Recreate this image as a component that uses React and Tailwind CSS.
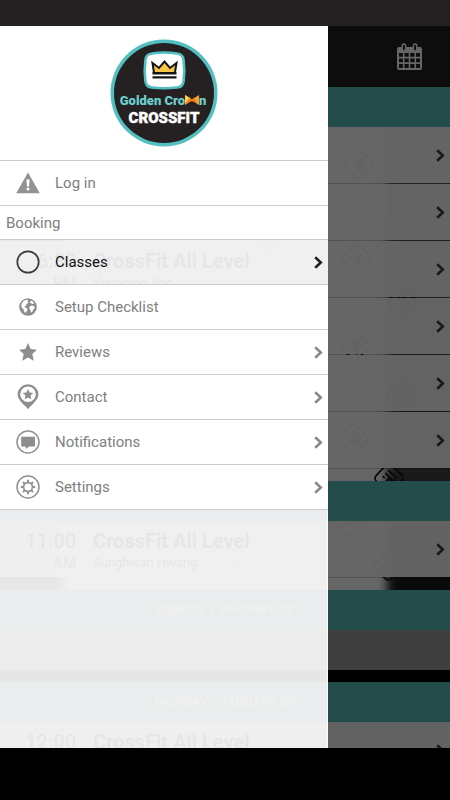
import React from "react";

const evening = { time: "6:30", half: "PM", title: "CrossFit All Level", coach: "Youngjoo Yoo" };
const morning = { time: "11:00", half: "AM", title: "CrossFit All Level", coach: "Sunghwan Hwang" };
const noon = { time: "12:00", half: "PM", title: "CrossFit All Level", coach: "" };

const days = [
  { label: "", classes: [null, null, evening, null, null, null] },
  { label: "", classes: [morning] },
  { label: "SUNDAY / JANUARY 08", classes: [] },
  { label: "MONDAY / JANUARY 09", classes: [noon] },
];

const stamps = [
  [359, 78], [357, 171], [355, 259], [354, 351], [389, 391], [348, 434], [388, 479],
  [402, 215], [401, 307], [237, 475], [78, 518], [268, 165], [270, 345],
];

function Chevron({ className }) {
  return (
    <svg className={className} width="9" height="13" viewBox="0 0 9 13" fill="none" stroke="currentColor" strokeWidth="2.6" aria-hidden="true">
      <path d="M1.2 1.2 6.8 6.5 1.2 11.8" />
    </svg>
  );
}

function WarningIcon() {
  return (
    <svg width="24" height="22" viewBox="0 0 24 22" aria-hidden="true">
      <path d="M12 .5 23.8 21.2H.2Z" fill="#929292" />
      <path d="M10.4 7.5h3.2l-.6 7h-2Z" fill="#fff" />
      <circle cx="12" cy="17.1" r="1.5" fill="#fff" />
    </svg>
  );
}

function RingIcon() {
  return (
    <svg width="24" height="24" viewBox="0 0 24 24" fill="none" aria-hidden="true">
      <circle cx="12" cy="12" r="10.7" stroke="#3c3c3c" strokeWidth="1.7" />
    </svg>
  );
}

function GlobeIcon() {
  return (
    <svg width="18" height="18" viewBox="0 0 18 18" aria-hidden="true">
      <circle cx="9" cy="9" r="8.8" fill="#8e8e8e" />
      <path d="M4.200 3.200 6.500 1.900l2.700.2-.8 1.400 1.200 1-2.200 1.800-.5 1.700-1.700.3 1.400 1.400 1.700.9-.2 2-1.600 2.400L5 13.300l-.6-2.300-2-1.800.2-3.200Z" fill="#fff" />
      <path d="m10.800 8.200 2.200-.8 2.600 1-.2 2.200-1.500 1.400-.5 2-1.200.6-.9-2.500-1-1.700Z" fill="#fff" />
      <path d="m11.800 2.600 2 1 1.300 1.900-1.500.4-1.600-.6-1-.9Z" fill="#fff" />
    </svg>
  );
}

function StarIcon() {
  return (
    <svg width="18" height="18" viewBox="0 0 18 18" aria-hidden="true">
      <path d="m9 .1 2.700 5.900 6.300.7-4.700 4.400 1.400 6.700L9 14.400l-5.700 3.400 1.400-6.700L0 6.700 6.300 6Z" fill="#8e8e8e" />
    </svg>
  );
}

function PinIcon() {
  return (
    <svg width="22" height="26" viewBox="0 0 22 26" aria-hidden="true">
      <path d="M11 25.200C8.600 22 .6 16.500.6 10.600a10.400 10.400 0 0 1 20.800 0c0 5.900-8 11.400-10.400 14.600Z" fill="#8e8e8e" />
      <circle cx="11" cy="10.300" r="7.800" fill="#fff" />
      <path d="m11 5 1.600 3.500 3.800.4-2.900 2.600.8 3.800-3.300-1.900-3.300 1.900.8-3.800-2.900-2.600 3.800-.4Z" fill="#8e8e8e" />
    </svg>
  );
}

function MessageIcon() {
  return (
    <svg width="24" height="24" viewBox="0 0 24 24" aria-hidden="true">
      <circle cx="12" cy="12" r="11" fill="none" stroke="#929292" strokeWidth="1.500" />
      <path d="M5.200 6.800h13.800v9.600h-5.800l-3.600 2.500v-2.500H5.200Z" fill="#8e8e8e" />
    </svg>
  );
}

function GearIcon() {
  return (
    <svg width="24" height="24" viewBox="0 0 24 24" fill="none" stroke="#929292" aria-hidden="true">
      <circle cx="12" cy="12" r="11" strokeWidth="1.500" />
      <circle cx="12" cy="12" r="4.400" strokeWidth="1.600" />
      <path strokeWidth="2" d="M12 7.700V4.800M12 16.300V19.200M7.700 12H4.800M16.300 12H19.200M9 9 7 7M15 9l2-2M9 15l-2 2M15 15l2 2" />
    </svg>
  );
}

function CalendarIcon() {
  return (
    <svg width="25" height="28" viewBox="0 0 25 28" aria-hidden="true">
      <path d="M2 4h21a2 2 0 0 1 2 2v19a2 2 0 0 1-2 2H2a2 2 0 0 1-2-2V6a2 2 0 0 1 2-2Z" fill="currentColor" />
      <g fill="#252122" stroke="currentColor" strokeWidth="1.500">
        <rect x="5.200" y="1" width="3.400" height="7" rx="1.700" />
        <rect x="16.400" y="1" width="3.400" height="7" rx="1.700" />
      </g>
      <g fill="#252122">
        <path d="M2 10h3.900v3.800H2zM7.500 10h4.200v3.800H7.500zM13.300 10h4.200v3.800h-4.200zM19.100 10H23v3.800h-3.900z" />
        <path d="M2 15.400h3.900v3.900H2zM7.500 15.400h4.200v3.900H7.500zM13.300 15.400h4.200v3.900h-4.200zM19.100 15.400H23v3.900h-3.900z" />
        <path d="M2 20.900h3.900v4.100H2zM7.500 20.900h4.200v4.100H7.500zM13.300 20.900h4.200v4.100h-4.200zM19.100 20.900H23v4.100h-3.900z" />
      </g>
    </svg>
  );
}

function Logo() {
  return (
    <svg width="108" height="108" viewBox="0 0 108 108" role="img" aria-label="Golden Crown CrossFit">
      <circle cx="54" cy="54" r="53.500" fill="#54bfc0" />
      <circle cx="54" cy="54" r="50" fill="#252122" />
      <path d="M42 14.500q12-2 25 0 6 .6 6.600 6.500 1.400 11 0 21-.6 6-6.600 6.500-13 1.600-25 0-6-.6-6.600-6.500-1.400-10 0-21 .6-6 6.600-6.500Z" fill="#fff" stroke="#54bfc0" strokeWidth="2.600" />
      <path d="m42.500 24 6.500 5 5.500-6.500 5.500 6.500 6.500-5-1.600 10H44Z" fill="#f7c548" stroke="#151515" strokeWidth="2" />
      <path d="M42.500 33h24v2.600h-24zM42.500 37.200h24v2.200h-24z" fill="#151515" />
      <g fontFamily="'Roboto', 'Liberation Sans', sans-serif" fontWeight="900">
        <text x="75" y="66" fontSize="13" textAnchor="end" fill="#6ccdce">Golden Cro</text>
        <text x="89" y="66" fontSize="13" fill="#6ccdce">n</text>
        <text x="54" y="84" fontSize="15" textAnchor="middle" fill="#fff" stroke="#fff" strokeWidth=".4">CROSSFIT</text>
      </g>
      <path d="m75 56 7 4.500L89 56v10l-7-4.500L75 66Z" fill="#f9a51a" />
      <path d="m75 66 5-8 2 5 2-5 5 8-5-3.500-4 0Z" fill="#f47b20" />
      <path d="m75 56 5 3-5 5Z" fill="#fbd04b" />
    </svg>
  );
}

function Backdrop() {
  return (
    <svg className="absolute left-0 top-0 h-full w-full" viewBox="0 0 450 661" preserveAspectRatio="xMinYMin slice" aria-hidden="true">
      <defs>
        <linearGradient id="side" x1="0" y1="0" x2="0" y2="1">
          <stop offset="0" stopColor="#777" />
          <stop offset=".55" stopColor="#484848" />
          <stop offset=".8" stopColor="#111" />
          <stop offset="1" stopColor="#000" />
        </linearGradient>
        <filter id="soft"><feGaussianBlur stdDeviation="5" /></filter>
      </defs>
      <rect width="450" height="661" fill="url(#side)" />
      <rect x="62" y="-30" width="325" height="620" fill="#fff" filter="url(#soft)" />
      <g fill="none" stroke="#151515" strokeWidth="1.800">
        {stamps.map(([x, y]) => (
          <g key={`${x}-${y}`} transform={`translate(${x} ${y}) rotate(43)`}>
            <rect x="-11" y="-11" width="22" height="22" rx="4" />
            <path d="M-6-5H6M-6-1H0V6M-6 3h3M2 6V-1l5 6M7-3 2 0" />
          </g>
        ))}
      </g>
    </svg>
  );
}

function ClassRow({ item }) {
  return (
    <button
      type="button"
      aria-label={item ? undefined : "Open class"}
      className="flex h-[57px] w-full shrink-0 items-center border-b border-black/20 bg-white/96 bg-clip-padding pr-[5px] text-left text-black"
    >
      {item && (
        <>
          <span className="flex w-[76px] flex-col items-end pt-1">
            <span className="text-xl leading-6 font-medium">{item.time}</span>
            <span className="text-[15px] leading-5">{item.half}</span>
          </span>
          <span className="ml-[17px] flex flex-col pt-1">
            <span className="text-xl leading-6 font-bold">{item.title}</span>
            <span className="h-5 text-[13px] leading-5">{item.coach}</span>
          </span>
        </>
      )}
      <Chevron className="ml-auto text-[#3c3c3c]" />
    </button>
  );
}

function Schedule() {
  return (
    <main className="relative flex flex-1 flex-col overflow-hidden">
      <Backdrop />
      <div className="relative flex flex-col">
        {days.map((day, i) => (
          <section key={i} className={i === 3 ? "border-t-[12px] border-black" : i ? "pt-3" : ""}>
            <h2 className="flex h-10 items-center justify-center bg-[#5abebc] text-[13px] font-bold text-white">{day.label}</h2>
            {day.classes.map((item, n) => (
              <ClassRow key={n} item={item} />
            ))}
            {!day.classes.length && (
              <p className="flex h-10 items-center justify-center bg-[#9c9c9c] text-[13px] text-white">No classes</p>
            )}
          </section>
        ))}
      </div>
    </main>
  );
}

const items = [
  { label: "Classes", Icon: RingIcon, arrow: true, active: true },
  { label: "Setup Checklist", Icon: GlobeIcon },
  { label: "Reviews", Icon: StarIcon, arrow: true },
  { label: "Contact", Icon: PinIcon, arrow: true },
  { label: "Notifications", Icon: MessageIcon, arrow: true },
  { label: "Settings", Icon: GearIcon, arrow: true },
];

function MenuItem({ label, Icon, arrow, active }) {
  return (
    <button
      type="button"
      aria-current={active ? "page" : undefined}
      className={`flex h-[45px] w-full items-center border-b border-[#ccc] pr-[5px] text-left ${active ? "bg-white/90 text-[#111]" : "bg-white text-[#808080]"}`}
    >
      <span className="flex w-[55px] justify-center"><Icon /></span>
      <span className="flex-1 text-[15px] leading-5">{label}</span>
      {arrow && <Chevron className={active ? "text-[#222]" : "text-[#8a8a8a]"} />}
    </button>
  );
}

function Drawer() {
  return (
    <aside className="absolute inset-y-0 left-0 flex w-[328px] flex-col">
      <div className="flex h-[135px] shrink-0 justify-center border-b border-[#ccc] bg-white pt-[13px]">
        <Logo />
      </div>
      <nav aria-label="Main menu">
        <MenuItem label="Log in" Icon={WarningIcon} />
        <h2 className="flex h-[34px] items-center border-b border-[#ccc] bg-white px-1.5 text-[15px] leading-5 text-[#808080]">Booking</h2>
        {items.map((item) => (
          <MenuItem key={item.label} {...item} />
        ))}
      </nav>
      <div className="flex-1 border-r border-white/70 bg-white/90" />
    </aside>
  );
}

export default function App() {
  return (
    <div className="flex h-screen flex-col bg-black font-['Roboto','Liberation_Sans',sans-serif]">
      <div className="h-[26px] shrink-0 bg-[#252122]" />
      <div className="relative flex min-h-0 flex-1 flex-col overflow-hidden">
        <header className="flex h-[61px] shrink-0 items-center justify-end bg-[#252122] pr-7">
          <button type="button" aria-label="Calendar" className="text-white">
            <CalendarIcon />
          </button>
        </header>
        <Schedule />
        <div className="absolute inset-0 bg-black/60" />
        <Drawer />
      </div>
      <div className="h-[52px] shrink-0 bg-black" />
    </div>
  );
}
